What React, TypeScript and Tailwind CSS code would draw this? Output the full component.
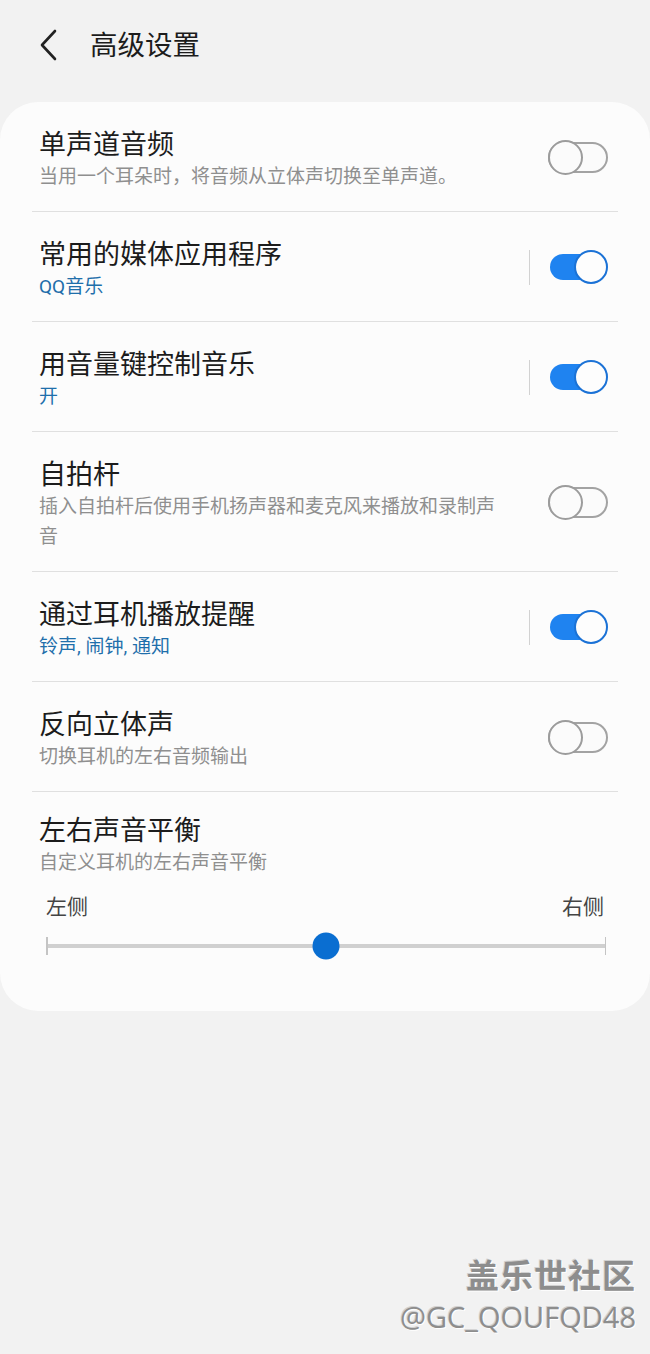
import React from "react";

const FONT = { fontFamily: 'Roboto, "Noto Sans CJK SC", "Noto Sans", sans-serif' };

type Row = {
  title: string;
  sub: string;
  blue?: boolean;
  on: boolean;
  bar?: boolean;
};

const rows: Row[] = [
  { title: "单声道音频", sub: "当用一个耳朵时，将音频从立体声切换至单声道。", on: false },
  { title: "常用的媒体应用程序", sub: "QQ音乐", blue: true, on: true, bar: true },
  { title: "用音量键控制音乐", sub: "开", blue: true, on: true, bar: true },
  { title: "自拍杆", sub: "插入自拍杆后使用手机扬声器和麦克风来播放和录制声音", on: false },
  { title: "通过耳机播放提醒", sub: "铃声, 闹钟, 通知", blue: true, on: true, bar: true },
  { title: "反向立体声", sub: "切换耳机的左右音频输出", on: false },
];

const Toggle: React.FC<{ on: boolean }> = ({ on }) => (
  <div className="relative w-[60px] h-[36px] shrink-0">
    {on ? (
      <>
        <div className="absolute left-[2px] right-[4px] top-[5px] h-[26px] rounded-full bg-[#1f83f0]" />
        <div className="absolute right-0 top-[1px] w-[34px] h-[34px] rounded-full bg-[#fdfdfd] border-[2px] border-[#1b72d6]" />
      </>
    ) : (
      <>
        <div className="absolute left-0 right-0 top-[3px] h-[31px] rounded-full border-[2px] border-[#a3a3a3] bg-[#fbfbfb]" />
        <div className="absolute left-0 top-[1px] w-[35px] h-[35px] rounded-full bg-[#fbfbfb] border-[2px] border-[#9c9c9c]" />
      </>
    )}
  </div>
);

const SettingRow: React.FC<{ row: Row }> = ({ row }) => (
  <div className="flex items-center pl-[39px] pr-[42px] pt-[26px] pb-[19px]">
    <div className="w-[465px]">
      <div className="text-[27px] leading-[34px] text-[#1c1c1c]">{row.title}</div>
      <div
        className={`text-[19px] leading-[30px] ${row.blue ? "text-[#1f6fab]" : "text-[#8f8f8f]"}`}
      >
        {row.sub}
      </div>
    </div>
    {/* toggle sits at the row's middle, a little above the text block's middle */}
    <div className="ml-auto mb-[6px] flex items-center gap-[18px]">
      {row.bar && <div className="w-[1.5px] h-[35px] bg-[#d2d2d2]" />}
      <Toggle on={row.on} />
    </div>
  </div>
);

const Divider = () => <div className="mx-[32px] h-px bg-[#e0e0e0]" />;

export default function App() {
  return (
    <div className="min-h-[1354px] w-[650px] bg-[#f2f2f2] flex flex-col" style={FONT}>
      {/* header */}
      <div className="h-[90px] flex items-center pl-[38px]">
        <svg width="22" height="32" viewBox="0 0 22 32" fill="none">
          <path d="M17 2 L4 16 L17 30" stroke="#222" strokeWidth="2.6" strokeLinecap="round" strokeLinejoin="round" />
        </svg>
        <div className="ml-[30px] mt-[2px] text-[27.5px] leading-[34px] text-[#1c1c1c]">高级设置</div>
      </div>

      {/* card */}
      <div className="mt-[12px] bg-[#fcfcfc] rounded-[38px]">
        {rows.map((r) => (
          <React.Fragment key={r.title}>
            <SettingRow row={r} />
            <Divider />
          </React.Fragment>
        ))}

        {/* balance */}
        <div className="pl-[39px] pt-[22px]">
          <div className="text-[27px] leading-[34px] text-[#1c1c1c]">左右声音平衡</div>
          <div className="text-[19px] leading-[30px] text-[#8f8f8f]">自定义耳机的左右声音平衡</div>
        </div>
        <div className="mt-[15px] flex justify-between pl-[46px] pr-[46px] text-[21px] leading-[28px] text-[#444]">
          <span>左侧</span>
          <span>右侧</span>
        </div>
        <div className="mt-[10px] pb-[50px] pl-[46px] pr-[44px]">
          <div className="relative h-[30px] flex items-center">
            <div className="w-[1.5px] h-[18px] bg-[#c4c4c4]" />
            <div className="flex-1 h-[4px] bg-[#d0d0d0]" />
            <div className="w-[1.5px] h-[18px] bg-[#c4c4c4]" />
            <div className="absolute left-1/2 top-1/2 -translate-x-1/2 -translate-y-1/2 w-[27px] h-[27px] rounded-full bg-[#0a6ed1]" />
          </div>
        </div>
      </div>

      {/* watermark */}
      <div className="mt-auto pb-[18px] pr-[14px] flex flex-col items-end">
        <div
          className="text-[33px] leading-[42px] font-bold text-[#8d8d8d] tracking-[1px]"
          style={{ textShadow: "1px 1px 0 #ffffff, -1px -1px 0 #d0d0d0" }}
        >
          盖乐世社区
        </div>
        <div
          className="text-[29px] leading-[38px] text-[#8d8d8d]"
          style={{ fontFamily: '"Open Sans", "Noto Sans", sans-serif', textShadow: "1px 1px 0 #ffffff, -1px -1px 0 #d0d0d0" }}
        >
          @GC_QOUFQD48
        </div>
      </div>
    </div>
  );
}
